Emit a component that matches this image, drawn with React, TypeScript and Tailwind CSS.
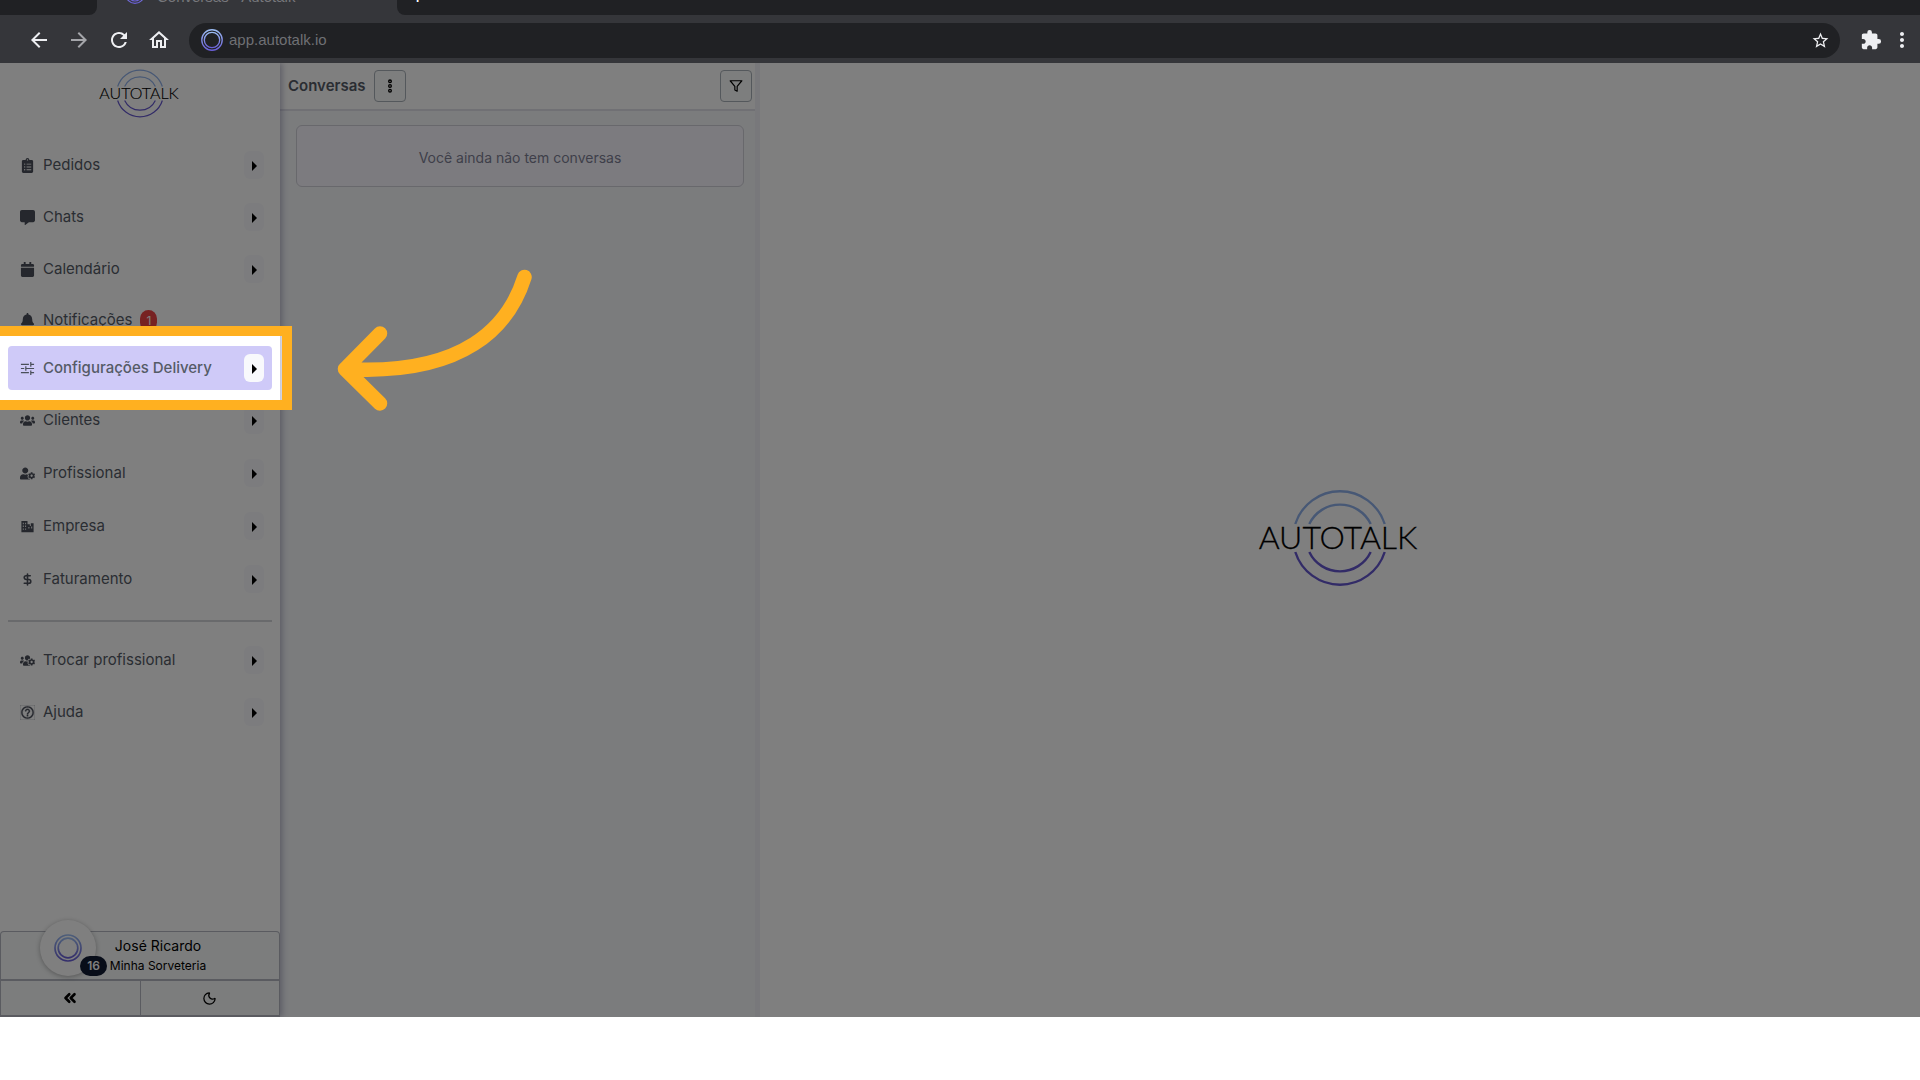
import type { ReactNode } from "react";
import {
  FaBell,
  FaCalendar,
  FaClipboardList,
  FaCommentAlt,
  FaUserCog,
  FaUsers,
  FaUsersCog,
} from "react-icons/fa";
import {
  MdExtension,
  MdHelpOutline,
  MdMoreVert,
  MdOutlineStarBorder,
  MdArrowBack,
  MdArrowForward,
  MdOutlineHome,
  MdRefresh,
} from "react-icons/md";
import { ChevronsLeft, DollarSign, EllipsisVertical, Moon } from "lucide-react";
import { FiFilter } from "react-icons/fi";

function Ring({ id, className }: { id: string; className: string }) {
  return (
    <svg viewBox="0 0 28 28" className={className} fill="none" aria-hidden="true">
      <defs>
        <linearGradient id={id} x1="0" y1="0" x2="0" y2="1">
          <stop offset="0" stopColor="#9bbcf3" />
          <stop offset="1" stopColor="#6a5fd8" />
        </linearGradient>
      </defs>
      <circle cx="14" cy="14" r="13" stroke={`url(#${id})`} strokeWidth="1.7" />
      <circle cx="14" cy="14" r="9.8" stroke={`url(#${id})`} strokeWidth="1.7" />
    </svg>
  );
}

function Logo({ className }: { className: string }) {
  return (
    <svg
      viewBox="0 0 160 98"
      className={`overflow-visible ${className}`}
      fill="none"
      role="img"
      aria-label="Autotalk"
    >
      <g stroke="#8fb0ea" strokeWidth="2.4">
        <path d="M35.3 35A46.9 46.9 0 0 1 124.7 35" />
        <path d="M49.3 35A34 34 0 0 1 110.700 35" />
      </g>
      <g stroke="#6457cf" strokeWidth="2.4">
        <path d="M35.3 63A46.9 46.9 0 0 0 124.7 63" />
        <path d="M49.3 63A34 34 0 0 0 110.700 63" />
      </g>
      <text
        x="78"
        y="60"
        textAnchor="middle"
        fontFamily="Lato, sans-serif"
        fontWeight="300"
        fontSize="32"
        fill="#000"
        stroke="#000"
        strokeWidth="0.3"
      >
        AUTOTALK
      </text>
    </svg>
  );
}

function TuneIcon({ className }: { className: string }) {
  return (
    <svg viewBox="0 0 16 16" className={className} fill="none" stroke="currentColor" strokeWidth="1.3" aria-hidden="true">
      <path d="M1 3.500H9.500M11.500 3.500H15M11.500 1V6M1 8H4.500M6.500 8H15M6.200 5.500V10.500M1 12.500H9.500M11.500 12.500H15M11.500 10V15" />
    </svg>
  );
}

function CompanyIcon({ className }: { className: string }) {
  return (
    <svg viewBox="0 0 16 16" className={className} fill="currentColor" fillRule="evenodd" aria-hidden="true">
      <path d="M1.500 2H8V5.500H10.500V7.500H11.500V4.500H14.500V14H1.500ZM3 4V5.500H4V4ZM5.500 4V5.500H6.500V4ZM3 7V8.500H4V7ZM5.500 7V8.500H6.500V7ZM3 10V11.500H4V10ZM5.500 10V11.500H6.500V10ZM9 8.500V10H10V8.500ZM12 8V10H13V8Z" />
    </svg>
  );
}

type Item = { label: string; icon: ReactNode };

const icon = "size-[15px] shrink-0 text-[#4a4f5a]";

const topItems: Item[] = [
  { label: "Pedidos", icon: <FaClipboardList className={icon} /> },
  { label: "Chats", icon: <FaCommentAlt className={icon} /> },
  { label: "Calendário", icon: <FaCalendar className={icon} /> },
];

const midItems: Item[] = [
  { label: "Clientes", icon: <FaUsers className={icon} /> },
  { label: "Profissional", icon: <FaUserCog className={icon} /> },
  { label: "Empresa", icon: <CompanyIcon className={icon} /> },
  { label: "Faturamento", icon: <DollarSign strokeWidth={3} className="mx-px size-[13px] shrink-0 text-[#4a4f5a]" /> },
];

const bottomItems: Item[] = [
  { label: "Trocar profissional", icon: <FaUsersCog className={icon} /> },
  { label: "Ajuda", icon: <MdHelpOutline strokeWidth={0.5} className={icon} /> },
];

function Row({ label, icon, active }: Item & { active?: boolean }) {
  return (
    <li
      className={
        active
          ? "relative flex h-11 items-center rounded bg-[#cfcaf8] pr-2 pl-3 font-medium"
          : "flex h-11 items-center pr-2 pl-3"
      }
    >
      <a href="#" className="flex flex-1 items-center gap-2">
        {icon}
        {label}
      </a>
      <button
        aria-label={`Expandir ${label}`}
        className="flex h-7 w-5 items-center justify-center rounded-md bg-[#f8f9fc] pt-0.5 text-black"
      >
        <svg viewBox="0 0 5 10" className="h-2.5 w-[5px]" fill="currentColor" aria-hidden="true">
          <path d="M0 0L5 5L0 10Z" />
        </svg>
      </button>
      {active && (
        <div className="pointer-events-none absolute -top-5 -right-5 -bottom-5 -left-2 z-20 border-y-10 border-r-10 border-[#ffb020] shadow-[0_0_0_3000px_rgba(0,0,0,0.5)]" />
      )}
    </li>
  );
}

function BrowserBar() {
  return (
    <header className="bg-[#35363a]">
      <div className="flex h-[15px] overflow-hidden">
        <div className="w-[97px] rounded-br-lg bg-[#202124]" />
        <div className="flex w-[300px] items-end gap-3 pl-7">
          <Ring id="tab" className="mb-[11px] size-5 shrink-0" />
          <span className="mb-2 font-['Liberation_Sans',sans-serif] text-[15px] leading-5 whitespace-nowrap text-[#77787c]">
            Conversas - Autotalk
          </span>
        </div>
        <div className="flex flex-1 items-end rounded-bl-lg bg-[#202124] pl-[14px] text-white">
          <span className="mb-[9px] text-xl leading-5">+</span>
        </div>
      </div>
      <div className="flex h-12 items-center pt-0.5 pr-1.5 pl-[27px] text-[#eeeff2]">
        <nav className="flex gap-4">
          <button aria-label="Voltar"><MdArrowBack className="size-6" /></button>
          <button aria-label="Avançar" className="text-[#a5a6aa]"><MdArrowForward className="size-6" /></button>
          <button aria-label="Recarregar"><MdRefresh className="size-6" /></button>
          <button aria-label="Início"><MdOutlineHome className="size-6" /></button>
        </nav>
        <div className="ml-[18px] flex h-[35px] flex-1 items-center rounded-full bg-[#202124] pr-2.5 pl-3">
          <Ring id="url" className="size-[22px]" />
          <input
            aria-label="Endereço"
            defaultValue="app.autotalk.io"
            className="ml-1.5 flex-1 bg-transparent font-['Liberation_Sans',sans-serif] text-[15px] text-[#6f7074] outline-none"
          />
          <button aria-label="Favoritar"><MdOutlineStarBorder className="size-[19px]" /></button>
        </div>
        <button aria-label="Extensões" className="ml-5"><MdExtension className="size-[22px]" /></button>
        <button aria-label="Menu" className="ml-2"><MdMoreVert className="size-6" /></button>
      </div>
    </header>
  );
}

function Sidebar() {
  return (
    <aside className="relative z-10 flex w-[280px] flex-col bg-white shadow-[2px_0_6px_rgba(60,60,110,0.35)]">
      <Logo className="mx-auto mt-[6px] h-[49px] w-20" />
      <nav className="mt-[25px] px-2">
        <ul className="flex flex-col gap-2">
          {topItems.map((i) => <Row key={i.label} {...i} />)}
          <li className="flex h-[39px] items-center px-3 pt-1">
            <a href="#" className="flex items-center gap-2">
              <FaBell className={icon} />
              Notificações
              <span className="flex h-[21px] w-[17px] items-center justify-center rounded-full bg-[#ef4444] text-xs text-white">
                1
              </span>
            </a>
          </li>
          <Row label="Configurações Delivery" icon={<TuneIcon className={icon} />} active />
        </ul>
        <ul className="mt-2 flex flex-col gap-[9px]">
          {midItems.map((i) => <Row key={i.label} {...i} />)}
        </ul>
        <hr className="mt-[19px] mb-4 border-t-2 border-[#d3d4d8]" />
        <ul className="flex flex-col gap-2">
          {bottomItems.map((i) => <Row key={i.label} {...i} />)}
        </ul>
      </nav>
      <footer className="relative mt-auto rounded-t border border-b-2 border-[#b4b7c0] bg-[#f8fafa] text-black">
        <div className="flex h-[47px] flex-col items-center justify-center pl-9 leading-5">
          <span className="text-sm leading-5">José Ricardo</span>
          <span className="text-xs leading-5">Minha Sorveteria</span>
        </div>
        <div className="flex h-9 border-t-2 border-[#b4b7c0]">
          <button aria-label="Recolher menu" className="flex flex-1 items-center justify-center border-r border-[#b4b7c0]">
            <ChevronsLeft className="size-[18px]" strokeWidth={3.5} />
          </button>
          <button aria-label="Modo escuro" className="flex flex-1 items-center justify-center">
            <Moon className="size-[15px]" />
          </button>
        </div>
        <button
          aria-label="Abrir chat"
          className="absolute -top-3 left-[39px] flex size-14 items-center justify-center rounded-full bg-white shadow-[0_1px_5px_rgba(0,0,0,0.3)]"
        >
          <Ring id="chat" className="size-7" />
          <span className="absolute -right-[11px] bottom-0 flex h-5 w-[27px] items-center justify-center rounded-full bg-[#101a33] text-xs font-semibold text-white">
            16
          </span>
        </button>
      </footer>
    </aside>
  );
}

function Conversations() {
  const square =
    "flex h-8 w-8 items-center justify-center rounded border border-[#a9b0b8] bg-[#fafcfc] text-black";
  return (
    <section className="w-[480px] border-r-[5px] border-[#f1f0f7] bg-[#f6f8fb]">
      <div className="flex h-12 items-center gap-2 border-b-2 border-[#e0e0e9] bg-white pr-[3px] pl-2">
        <h1 className="text-[15px] font-semibold">Conversas</h1>
        <button aria-label="Mais opções" className={square}>
          <EllipsisVertical className="size-4" strokeWidth={4} />
        </button>
        <button aria-label="Filtrar" className={`${square} ml-auto`}>
          <FiFilter className="size-[14px]" />
        </button>
      </div>
      <p className="mt-[14px] mr-[11px] ml-4 flex h-[62px] items-center justify-center rounded-md border border-[#d0d0d8] bg-[#f9f7ff] pt-1 text-sm text-[#7e7f94]">
        Você ainda não tem conversas
      </p>
    </section>
  );
}

export default function App() {
  return (
    <div className="flex h-screen flex-col bg-white font-[Inter,sans-serif] text-[15px] text-[#555b66]">
      <BrowserBar />
      <div className="relative isolate mb-[63px] flex min-h-0 flex-1 overflow-hidden">
        <Sidebar />
        <Conversations />
        <main className="flex flex-1 items-center justify-center bg-white pb-1">
          <Logo className="h-[98px] w-40" />
        </main>
        <svg
          viewBox="0 0 240 180"
          className="pointer-events-none absolute top-[187px] left-80 z-30 h-[180px] w-60"
          fill="none"
          stroke="#ffb020"
          strokeWidth="14.5"
          strokeLinecap="round"
          strokeLinejoin="round"
          aria-hidden="true"
        >
          <path d="M204.500 27C189 76 145 126 25 119M60 83.500L25 119L60 153.500" />
        </svg>
      </div>
    </div>
  );
}
